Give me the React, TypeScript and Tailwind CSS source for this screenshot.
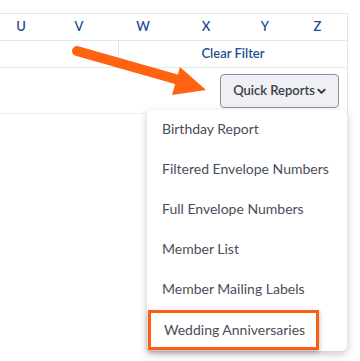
import React from "react";

const letters: [string, string][] = [
  ["U", "w-[42px]"],
  ["V", "w-[74px]"],
  ["W", "w-[54px]"],
  ["X", "w-[72px]"],
  ["Y", "w-[46px]"],
  ["Z", "w-[59px]"],
];

const items = [
  "Birthday Report",
  "Filtered Envelope Numbers",
  "Full Envelope Numbers",
  "Member List",
  "Member Mailing Labels",
  "Wedding Anniversaries",
];

export default function App() {
  return (
    <div
      className="relative w-[360px] h-[361px] bg-white overflow-hidden"
      style={{ fontFamily: "Lato, 'Open Sans', sans-serif" }}
    >
      <div className="pt-[13px]">
        <div className="w-[348px] border-t border-r border-[#e6e6e6]">
          <div className="flex h-[27px] items-center border-b border-[#e6e6e6]">
            {letters.map(([l, w]) => (
              <div key={l} className={`${w} text-center text-[13px] font-semibold text-[#1d4f91]`}>
                {l}
              </div>
            ))}
          </div>
          <div className="flex h-[27px] border-b border-[#e6e6e6]">
            <div className="w-[119px] border-r border-[#e6e6e6]" />
            <div className="flex-1 flex items-center justify-center text-[13px] font-semibold text-[#1d4f91]">
              Clear Filter
            </div>
          </div>
          <div className="flex h-[46px] justify-end items-start pt-[6px] pr-[8px] border-b border-[#eeeeee]">
            <button className="flex items-center gap-[2px] h-[34px] pl-[12px] pr-[12px] rounded-[4px] border border-[#8a8f99] bg-[#eef0f5] text-[13px] font-semibold text-[#3b3e48]">
              Quick Reports
              <svg width="9" height="7" viewBox="0 0 10 7">
                <path d="M1.5 1.5 L5 5 L8.5 1.5" fill="none" stroke="#3b3e48" strokeWidth="2.2" strokeLinecap="round" strokeLinejoin="round" />
              </svg>
            </button>
          </div>
        </div>
      </div>

      <div className="absolute left-[147px] top-[110px] w-[200px] h-[241px] bg-white rounded-[5px] shadow-[0_3px_8px_rgba(0,0,0,0.22)]">
        {items.map((t, i) => (
          <div
            key={t}
            className={
              i === 5
                ? "h-[40px] mx-[1px] flex items-center pl-[13px] pb-[2px] text-[14px] text-[#4a4d5a] border-[3px] border-[#fb5f12] w-[171px] shadow-[0_2px_5px_rgba(0,0,0,0.3)]"
                : "h-[40px] flex items-center pl-[15px] pb-[3px] text-[14px] text-[#4a4d5a]"
            }
          >
            {t}
          </div>
        ))}
      </div>

      <svg className="absolute left-0 top-0" width="360" height="361" viewBox="0 0 360 361">
        <line x1="77" y1="51" x2="186" y2="82" stroke="#ff6210" strokeWidth="10" strokeLinecap="round" />
        <polygon points="180,67 206,90 172,95" fill="#ff6210" />
      </svg>
    </div>
  );
}
